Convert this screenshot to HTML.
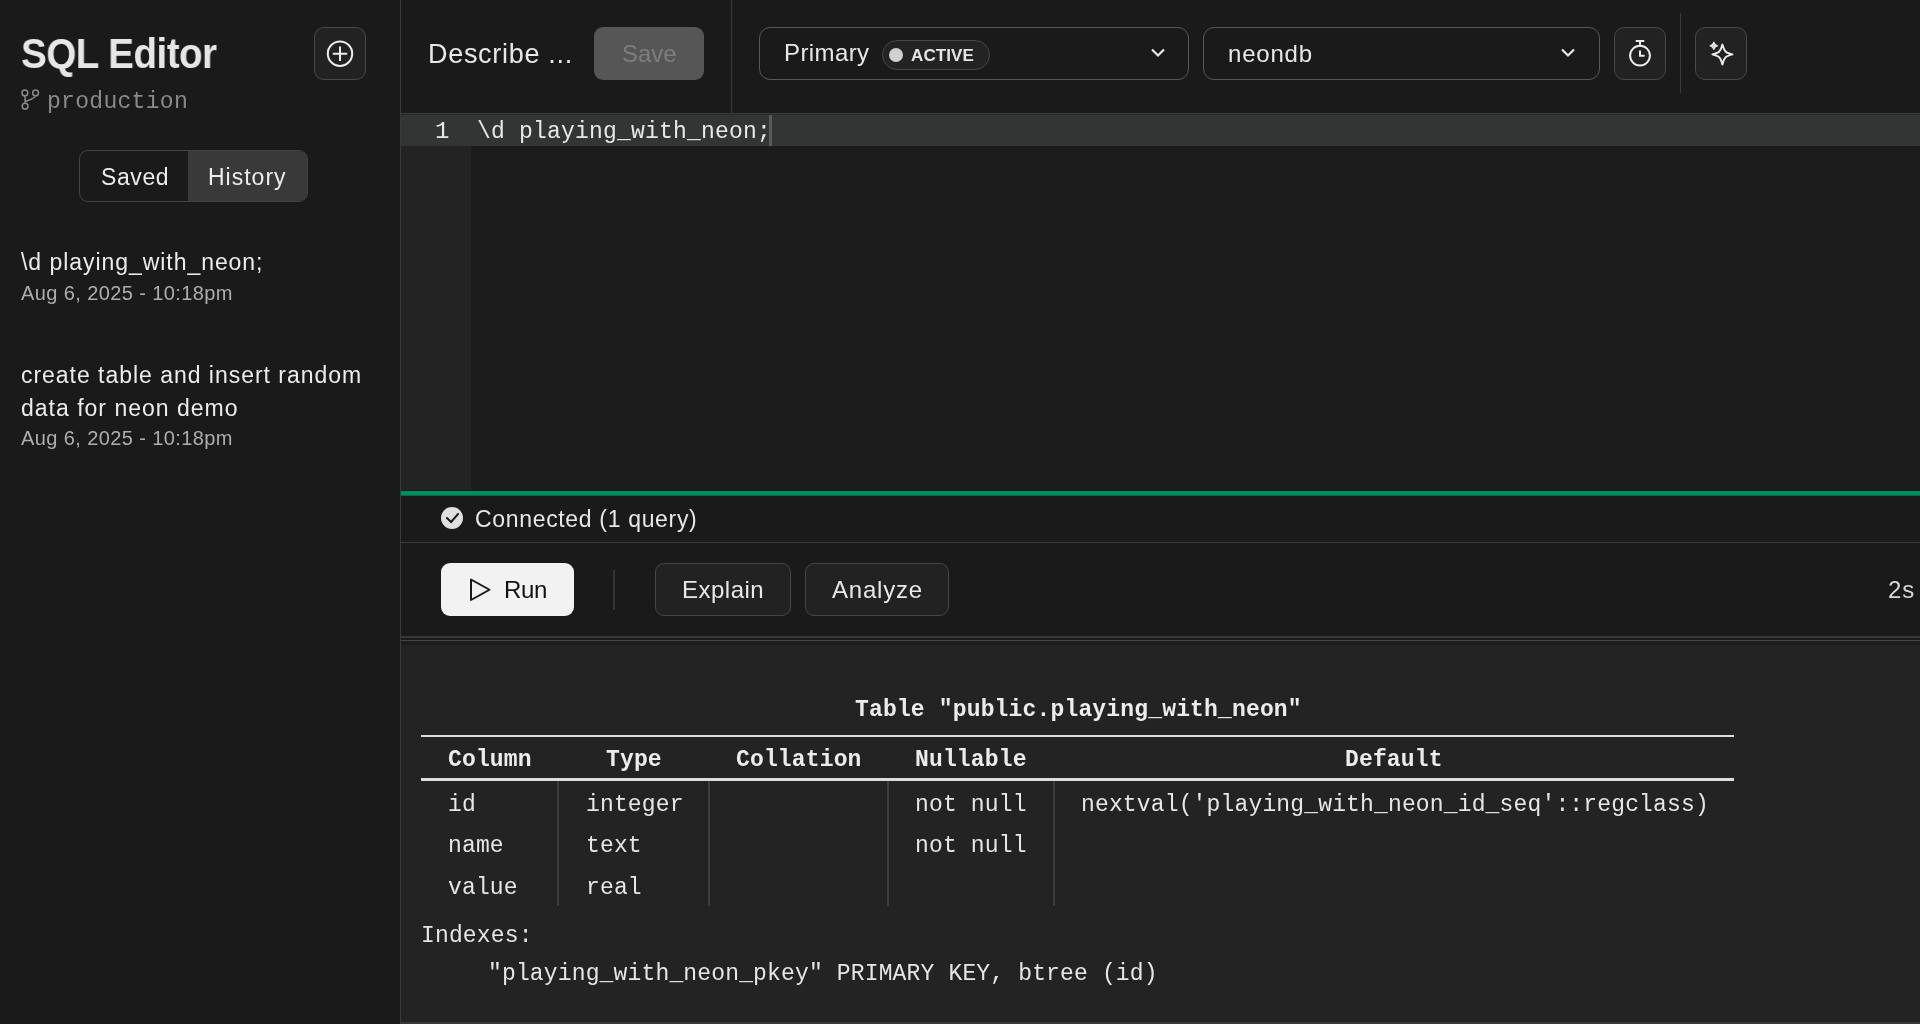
<!DOCTYPE html>
<html><head><meta charset="utf-8">
<style>
*{margin:0;padding:0;box-sizing:border-box}
html,body{width:1920px;height:1024px;overflow:hidden;background:#1a1a1a;font-family:"Liberation Sans",sans-serif;color:#e8e8e8}
.a{position:absolute;will-change:transform}
.mono{font-family:"Liberation Mono",monospace}
.t{white-space:nowrap;line-height:1}
.tb{will-change:transform;font-family:"Liberation Mono",monospace;font-size:23px;color:#e6e6e6;white-space:nowrap;line-height:1;position:absolute;letter-spacing:0.15px}
.th{font-weight:bold;color:#ececec}
svg{position:absolute;overflow:visible;will-change:transform}
</style></head><body>
<!-- sidebar -->
<div class="a" style="left:400px;top:0;width:1px;height:1024px;background:#3a3a3a"></div>
<div class="a t" id="title" style="left:21px;top:33px;font-size:42px;font-weight:bold;color:#e6e6e6;letter-spacing:-0.6px;transform:scaleX(0.92);transform-origin:0 0">SQL Editor</div>
<div class="a" style="left:314px;top:27px;width:52px;height:53px;border:1px solid #4a4a4a;border-radius:10px;background:#222"></div>
<svg style="left:314px;top:27px" width="52" height="53" viewBox="0 0 52 53"><circle cx="26" cy="26.7" r="12.2" fill="none" stroke="#ececec" stroke-width="2"/><path d="M26 19.5v14.4M18.8 26.7h14.4" stroke="#ececec" stroke-width="2" fill="none"/></svg>
<svg style="left:21px;top:89px" width="20" height="22" viewBox="0 0 20 22"><circle cx="3.9" cy="3.9" r="2.9" fill="none" stroke="#8a8a8a" stroke-width="1.5"/><circle cx="14.6" cy="3.9" r="2.9" fill="none" stroke="#8a8a8a" stroke-width="1.5"/><circle cx="4.1" cy="17.2" r="2.9" fill="none" stroke="#8a8a8a" stroke-width="1.5"/><path d="M3.9 6.8Q4.3 10 4.1 14.3M14.3 6.9Q13.5 9.5 5 12.3" stroke="#8a8a8a" stroke-width="1.5" fill="none"/></svg>
<div class="a t mono" id="prod" style="left:47px;top:91px;font-size:23px;color:#8a8a8a;letter-spacing:0.3px">production</div>
<div class="a" style="left:79px;top:150px;width:229px;height:52px;border:1px solid #444;border-radius:9px;background:#1a1a1a;overflow:hidden">
  <div class="a" style="left:108px;top:-1px;width:121px;height:52px;background:#393939"></div>
</div>
<div class="a t" id="saved" style="left:101px;top:166px;font-size:23px;color:#ececec;letter-spacing:0.6px">Saved</div>
<div class="a t" id="hist" style="left:208px;top:166px;font-size:23px;color:#ececec;letter-spacing:1px">History</div>
<div class="a t" id="h1" style="left:21px;top:251px;font-size:23px;color:#ececec;letter-spacing:0.95px">\d playing_with_neon;</div>
<div class="a t" id="d1" style="left:21px;top:283px;font-size:20px;color:#adadad;letter-spacing:0.4px">Aug 6, 2025 - 10:18pm</div>
<div class="a t" id="h2" style="left:21px;top:364px;font-size:23px;color:#ececec;letter-spacing:0.97px">create table and insert random</div>
<div class="a t" id="h3" style="left:21px;top:397px;font-size:23px;color:#ececec;letter-spacing:1px">data for neon demo</div>
<div class="a t" id="d2" style="left:21px;top:428px;font-size:20px;color:#adadad;letter-spacing:0.4px">Aug 6, 2025 - 10:18pm</div>

<!-- header -->
<div class="a" style="left:401px;top:113px;width:1519px;height:1px;background:#3c3c3c"></div>
<div class="a" style="left:731px;top:0;width:1px;height:113px;background:#3a3a3a"></div>
<div class="a t" id="desc" style="left:428px;top:41px;font-size:27px;color:#e8e8e8;letter-spacing:0.7px">Describe ...</div>
<div class="a" style="left:594px;top:27px;width:110px;height:53px;border-radius:9px;background:#565656"></div>
<div class="a t" id="save" style="left:622px;top:42px;font-size:24px;color:#7e7e7e">Save</div>
<div class="a" style="left:759px;top:27px;width:430px;height:53px;border:1.5px solid #585858;border-radius:11px"></div>
<div class="a t" id="primary" style="left:784px;top:41px;font-size:24px;color:#e8e8e8;letter-spacing:0.4px">Primary</div>
<div class="a" style="left:882px;top:40px;width:108px;height:30px;border:1px solid #474747;border-radius:15px;background:#232323"></div>
<div class="a" style="left:889px;top:48px;width:14px;height:14px;border-radius:50%;background:#d0d0d0"></div>
<div class="a t" id="active" style="left:911px;top:47px;font-size:17px;font-weight:bold;color:#e6e6e6;letter-spacing:0.1px">ACTIVE</div>
<svg style="left:1150px;top:48px" width="16" height="10" viewBox="0 0 16 10"><path d="M2 1.5l6 6 6-6" stroke="#e8e8e8" stroke-width="2.2" fill="none"/></svg>
<div class="a" style="left:1203px;top:27px;width:397px;height:53px;border:1.5px solid #585858;border-radius:11px"></div>
<div class="a t" id="neondb" style="left:1228px;top:42px;font-size:24px;color:#e8e8e8;letter-spacing:0.8px">neondb</div>
<svg style="left:1560px;top:48px" width="16" height="10" viewBox="0 0 16 10"><path d="M2 1.5l6 6 6-6" stroke="#e8e8e8" stroke-width="2.2" fill="none"/></svg>
<div class="a" style="left:1614px;top:27px;width:52px;height:53px;border:1px solid #4a4a4a;border-radius:10px;background:#222"></div>
<svg style="left:1614px;top:27px" width="52" height="53" viewBox="0 0 52 53"><circle cx="26" cy="28.6" r="9.9" fill="none" stroke="#ececec" stroke-width="2"/><path d="M21.7 14h8.6M26 14v4M26 23.5v5.2h4.6" stroke="#ececec" stroke-width="2" fill="none"/></svg>
<div class="a" style="left:1680px;top:13px;width:1px;height:80px;background:#3a3a3a"></div>
<div class="a" style="left:1695px;top:27px;width:52px;height:53px;border:1px solid #4a4a4a;border-radius:10px;background:#222"></div>
<svg style="left:1695px;top:27px" width="52" height="53" viewBox="0 0 52 53"><path d="M27.4 17.6 Q29 23.2 30.5 24.3 Q31.6 25.8 37.4 27.4 Q31.6 29 30.5 30.5 Q29 31.6 27.4 37.4 Q25.8 31.6 24.3 30.5 Q23.2 29 17.4 27.4 Q23.2 25.8 24.3 24.3 Q25.8 23.2 27.4 17.6Z" fill="none" stroke="#ececec" stroke-width="2" stroke-linejoin="round"/><path d="M18.8 15.2 Q19.5 18.1 22.4 18.8 Q19.5 19.5 18.8 22.4 Q18.1 19.5 15.2 18.8 Q18.1 18.1 18.8 15.2Z" fill="#d8d8d8" stroke="#ececec" stroke-width="1.2" stroke-linejoin="round"/></svg>

<!-- editor -->
<div class="a" style="left:401px;top:114px;width:1519px;height:377px;background:#1c1c1c"></div>
<div class="a" style="left:401px;top:114px;width:70px;height:377px;background:#242324"></div>
<div class="a" style="left:401px;top:114px;width:1519px;height:1px;background:#262828"></div>
<div class="a" style="left:401px;top:115px;width:1519px;height:31px;background:#333535"></div>
<div class="a t mono" id="ln" style="left:435px;top:120px;font-size:24px;color:#e8e8e8">1</div>
<div class="a t mono" id="code" style="left:477px;top:121px;font-size:23px;color:#e8e8e8;letter-spacing:0.2px">\d playing_with_neon;</div>
<div class="a" style="left:769px;top:115px;width:3px;height:31px;background:#5a5a5a"></div>
<div class="a" style="left:401px;top:491px;width:1519px;height:4px;background:#008f63"></div>
<div class="a" style="left:401px;top:495px;width:1519px;height:1px;background:#0b6648"></div>
<div class="a" style="left:401px;top:490px;width:1519px;height:1px;background:#1a1919"></div>

<!-- status -->
<svg style="left:441px;top:507px" width="22" height="22" viewBox="0 0 22 22"><circle cx="11" cy="11" r="11" fill="#e0e0e0"/><path d="M5.4 10.6L10.1 15L17.6 6.3" stroke="#1a1a1a" stroke-width="2" fill="none"/></svg>
<div class="a t" id="conn" style="left:475px;top:508px;font-size:23px;color:#e8e8e8;letter-spacing:0.67px">Connected (1 query)</div>
<div class="a" style="left:401px;top:542px;width:1519px;height:1px;background:#3a3a3a"></div>
<div class="a" style="left:441px;top:563px;width:133px;height:53px;border-radius:9px;background:#f2f2f2"></div>
<svg style="left:469px;top:577px" width="24" height="26" viewBox="0 0 24 26"><path d="M2 2.5L2 23L20.5 12.75Z" fill="none" stroke="#1a1a1a" stroke-width="2" stroke-linejoin="round"/></svg>
<div class="a t" id="run" style="left:504px;top:578px;font-size:24px;color:#111;letter-spacing:-0.3px">Run</div>
<div class="a" style="left:613px;top:570px;width:2px;height:40px;background:#333"></div>
<div class="a" style="left:655px;top:563px;width:136px;height:53px;border:1px solid #464646;border-radius:9px;background:#222"></div>
<div class="a t" id="explain" style="left:682px;top:578px;font-size:24px;color:#e8e8e8;letter-spacing:0.5px">Explain</div>
<div class="a" style="left:805px;top:563px;width:144px;height:53px;border:1px solid #464646;border-radius:9px;background:#222"></div>
<div class="a t" id="analyze" style="left:832px;top:578px;font-size:24px;color:#e8e8e8;letter-spacing:0.8px">Analyze</div>
<div class="a t" id="twos" style="left:1888px;top:578px;font-size:24px;color:#d8d8d8;letter-spacing:0.8px">2s</div>
<div class="a" style="left:401px;top:636px;width:1519px;height:2px;background:#363939"></div>
<div class="a" style="left:401px;top:640px;width:1519px;height:1px;background:#444"></div>
<div class="a" style="left:401px;top:641px;width:1519px;height:4px;background:#1c1c1c"></div>

<!-- results -->
<div class="a" style="left:401px;top:645px;width:1519px;height:379px;background:#232323"></div>
<div class="tb th" id="ttitle" style="left:855px;top:699px;letter-spacing:0.16px">Table "public.playing_with_neon"</div>
<div class="a" style="left:421px;top:735px;width:1313px;height:2px;background:#dcdcdc"></div>
<div class="a" style="left:421px;top:778px;width:1313px;height:3px;background:#dcdcdc"></div>
<div class="a" style="left:557px;top:781px;width:2px;height:125px;background:#3e3e3e"></div>
<div class="a" style="left:708px;top:781px;width:2px;height:125px;background:#3e3e3e"></div>
<div class="a" style="left:887px;top:781px;width:2px;height:125px;background:#3e3e3e"></div>
<div class="a" style="left:1053px;top:781px;width:2px;height:125px;background:#3e3e3e"></div>
<div class="tb th" id="hcol" style="left:448px;top:749px">Column</div>
<div class="tb th" id="htype" style="left:606px;top:749px">Type</div>
<div class="tb th" id="hcoll" style="left:736px;top:749px">Collation</div>
<div class="tb th" id="hnull" style="left:915px;top:749px">Nullable</div>
<div class="tb th" id="hdef" style="left:1345px;top:749px">Default</div>
<div class="tb" id="r1a" style="left:448px;top:794px">id</div>
<div class="tb" id="r1b" style="left:586px;top:794px">integer</div>
<div class="tb" id="r1c" style="left:915px;top:794px">not null</div>
<div class="tb" id="r1d" style="left:1081px;top:794px">nextval('playing_with_neon_id_seq'::regclass)</div>
<div class="tb" id="r2a" style="left:448px;top:835px">name</div>
<div class="tb" id="r2b" style="left:586px;top:835px">text</div>
<div class="tb" id="r2c" style="left:915px;top:835px">not null</div>
<div class="tb" id="r3a" style="left:448px;top:877px">value</div>
<div class="tb" id="r3b" style="left:586px;top:877px">real</div>
<div class="tb" id="idx" style="left:421px;top:925px">Indexes:</div>
<div class="tb" id="idx2" style="left:488px;top:963px">"playing_with_neon_pkey" PRIMARY KEY, btree (id)</div>
<div class="a" style="left:401px;top:1022px;width:1519px;height:2px;background:#383838"></div>
</body></html>
